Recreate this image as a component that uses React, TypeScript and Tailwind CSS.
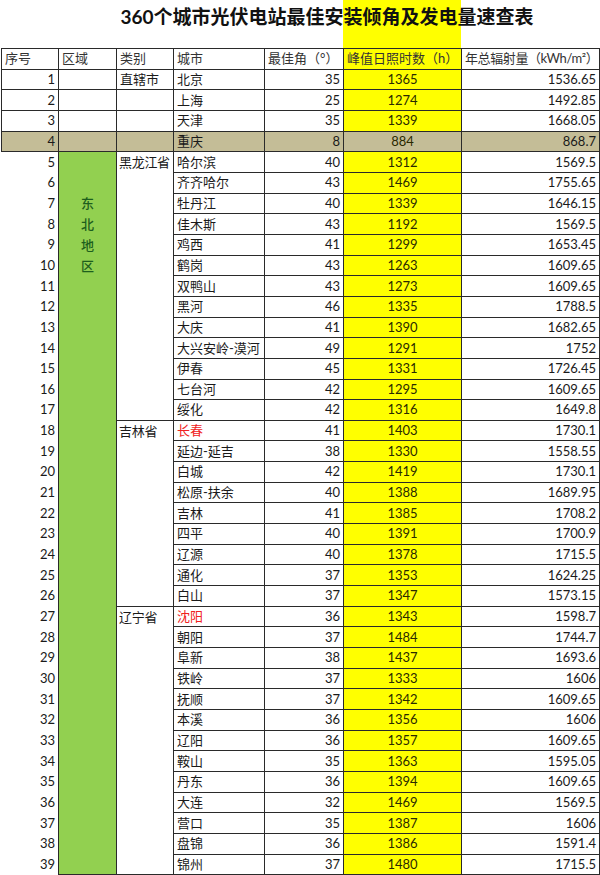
import React from "react";

type Row = [number, string, number, number, string];

const rows: Row[] = [
  [1, "北京", 35, 1365, "1536.65"],
  [2, "上海", 25, 1274, "1492.85"],
  [3, "天津", 35, 1339, "1668.05"],
  [4, "重庆", 8, 884, "868.7"],
  [5, "哈尔滨", 40, 1312, "1569.5"],
  [6, "齐齐哈尔", 43, 1469, "1755.65"],
  [7, "牡丹江", 40, 1339, "1646.15"],
  [8, "佳木斯", 43, 1192, "1569.5"],
  [9, "鸡西", 41, 1299, "1653.45"],
  [10, "鹤岗", 43, 1263, "1609.65"],
  [11, "双鸭山", 43, 1273, "1609.65"],
  [12, "黑河", 46, 1335, "1788.5"],
  [13, "大庆", 41, 1390, "1682.65"],
  [14, "大兴安岭-漠河", 49, 1291, "1752"],
  [15, "伊春", 45, 1331, "1726.45"],
  [16, "七台河", 42, 1295, "1609.65"],
  [17, "绥化", 42, 1316, "1649.8"],
  [18, "长春", 41, 1403, "1730.1"],
  [19, "延边-延吉", 38, 1330, "1558.55"],
  [20, "白城", 42, 1419, "1730.1"],
  [21, "松原-扶余", 40, 1388, "1689.95"],
  [22, "吉林", 41, 1385, "1708.2"],
  [23, "四平", 40, 1391, "1700.9"],
  [24, "辽源", 40, 1378, "1715.5"],
  [25, "通化", 37, 1353, "1624.25"],
  [26, "白山", 37, 1347, "1573.15"],
  [27, "沈阳", 36, 1343, "1598.7"],
  [28, "朝阳", 37, 1484, "1744.7"],
  [29, "阜新", 38, 1437, "1693.6"],
  [30, "铁岭", 37, 1333, "1606"],
  [31, "抚顺", 37, 1342, "1609.65"],
  [32, "本溪", 36, 1356, "1606"],
  [33, "辽阳", 36, 1357, "1609.65"],
  [34, "鞍山", 35, 1363, "1595.05"],
  [35, "丹东", 36, 1394, "1609.65"],
  [36, "大连", 32, 1469, "1569.5"],
  [37, "营口", 35, 1387, "1606"],
  [38, "盘锦", 36, 1386, "1591.4"],
  [39, "锦州", 37, 1480, "1715.5"],
];

const provinces: Record<number, [string, number]> = {
  5: ["黑龙江省", 13],
  18: ["吉林省", 9],
  27: ["辽宁省", 13],
};

const red = new Set([18, 27]);

const cell = "border border-[#2a2a2a] p-0 px-[3px] leading-none whitespace-nowrap overflow-hidden";

export default function App() {
  return (
    <div
      className="w-[600px] h-[875px] overflow-hidden bg-white text-[#1a1a1a] text-[13px]"
      style={{ fontFamily: 'Lato, "Noto Sans CJK SC", sans-serif' }}
    >
      <div className="h-[48px] pl-[54px] pt-[5px] text-center bg-[linear-gradient(to_right,transparent_343px,#ffff00_343px,#ffff00_461px,transparent_461px)]">
        <div className="text-[19px] leading-[24px] font-bold text-[#111]">
          360个城市光伏电站最佳安装倾角及发电量速查表
        </div>
      </div>
      <table className="border-collapse table-fixed w-[599px] ml-[1px]">
        <colgroup>
          <col className="w-[57px]" />
          <col className="w-[58px]" />
          <col className="w-[57px]" />
          <col className="w-[91px]" />
          <col className="w-[79px]" />
          <col className="w-[118px]" />
          <col className="w-[138px]" />
        </colgroup>
        <tbody>
          <tr className="h-[20.67px] text-[#333]">
            <td className={`${cell} text-left`}>序号</td>
            <td className={`${cell} text-left`}>区域</td>
            <td className={`${cell} text-left`}>类别</td>
            <td className={`${cell} text-left`}>城市</td>
            <td className={`${cell} text-left`}>最佳角（°）</td>
            <td className={`${cell} text-left bg-[#ffff00]`}>峰值日照时数（h）</td>
            <td className={`${cell} text-left tracking-[-0.4px] px-[2px]`}>年总辐射量（kWh/m²）</td>
          </tr>
          {rows.map(([n, city, ang, hrs, rad]) => {
            const tan = n === 4;
            const bg = tan ? "bg-[#c4bd97]" : "";
            return (
              <tr key={n} className="h-[20.67px]">
                <td
                  className={
                    n <= 4
                      ? `${cell} text-right ${bg}`
                      : "p-0 px-[3px] leading-none text-right border-0"
                  }
                >
                  {n}
                </td>
                {n <= 4 && <td className={`${cell} ${bg}`}></td>}
                {n === 5 && (
                  <td
                    rowSpan={35}
                    className="border border-[#2a2a2a] p-0 align-top bg-[#92d050] text-center text-[#1d5e1d] font-medium text-[13px]"
                  >
                    <div className="pt-[41px] flex flex-col items-center leading-[21px]">
                      <span>东</span>
                      <span>北</span>
                      <span>地</span>
                      <span>区</span>
                    </div>
                  </td>
                )}
                {n <= 4 && (
                  <td className={`${cell} ${bg}`}>{n === 1 ? "直辖市" : ""}</td>
                )}
                {provinces[n] && (
                  <td
                    rowSpan={provinces[n][1]}
                    className="border border-[#2a2a2a] p-0 px-[2px] align-top pt-[4px] leading-[13px] whitespace-nowrap tracking-[-0.3px]"
                  >
                    {provinces[n][0]}
                  </td>
                )}
                <td className={`${cell} text-left ${bg} ${red.has(n) ? "text-[#f02020]" : ""}`}>
                  {city}
                </td>
                <td className={`${cell} text-right ${bg}`}>{ang}</td>
                <td className={`${cell} text-center ${tan ? "bg-[#c4bd97]" : "bg-[#ffff00]"} text-[#2a2a00]`}>
                  {hrs}
                </td>
                <td className={`${cell} text-right ${bg}`}>{rad}</td>
              </tr>
            );
          })}
        </tbody>
      </table>
    </div>
  );
}
